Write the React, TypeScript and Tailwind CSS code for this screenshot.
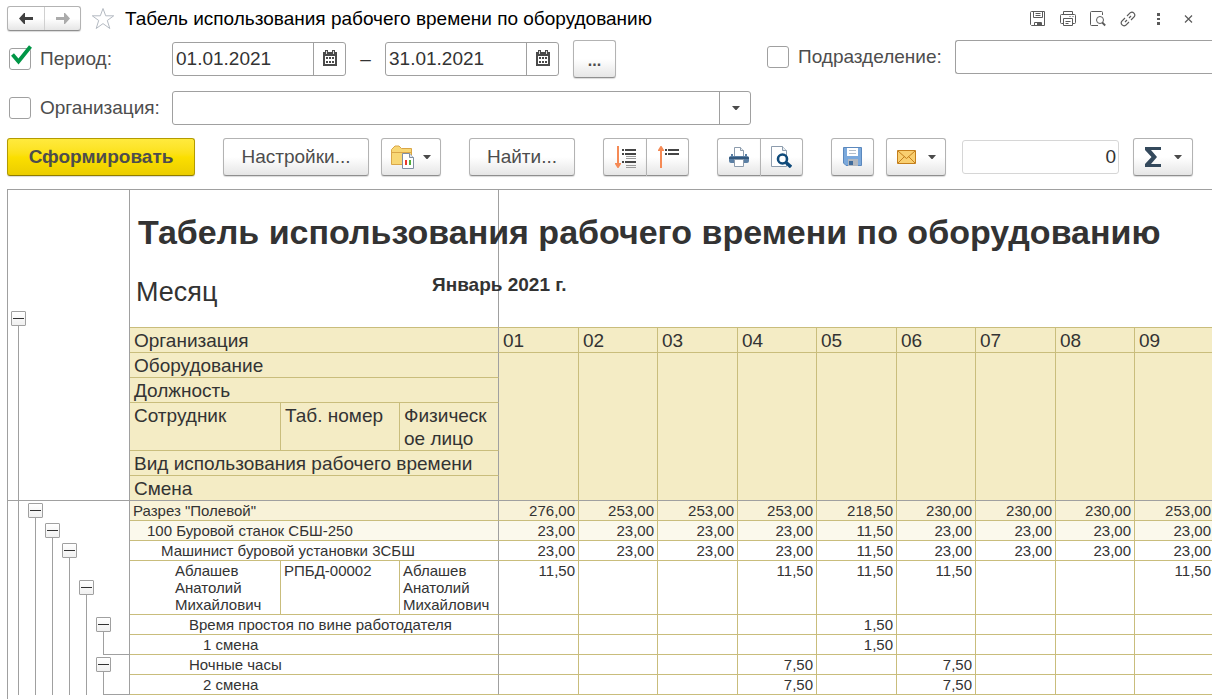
import type { ReactNode } from "react";
import clsx from "clsx";

type Row = {
  level: number;
  cells: string[];
  values: string[];
  tone?: string;
  last?: boolean;
};

const days = ["01", "02", "03", "04", "05", "06", "07", "08", "09"];

const rows: Row[] = [
  {
    level: 1,
    cells: ['Разрез "Полевой"'],
    values: ["276,00", "253,00", "253,00", "253,00", "218,50", "230,00", "230,00", "230,00", "253,00"],
    tone: "bg-[#f8f2d8]",
  },
  {
    level: 2,
    cells: ["100 Буровой станок СБШ-250"],
    values: ["23,00", "23,00", "23,00", "23,00", "11,50", "23,00", "23,00", "23,00", "23,00"],
    tone: "bg-[#fbf9ec]",
  },
  {
    level: 3,
    cells: ["Машинист буровой установки 3СБШ"],
    values: ["23,00", "23,00", "23,00", "23,00", "11,50", "23,00", "23,00", "23,00", "23,00"],
  },
  {
    level: 4,
    cells: ["Аблашев Анатолий Михайлович", "РПБД-00002", "Аблашев Анатолий Михайлович"],
    values: ["11,50", "", "", "11,50", "11,50", "11,50", "", "", "11,50"],
  },
  {
    level: 5,
    cells: ["Время простоя по вине работодателя"],
    values: ["", "", "", "", "1,50", "", "", "", ""],
  },
  {
    level: 6,
    cells: ["1 смена"],
    values: ["", "", "", "", "1,50", "", "", "", ""],
    last: true,
  },
  {
    level: 5,
    cells: ["Ночные часы"],
    values: ["", "", "", "7,50", "", "7,50", "", "", ""],
  },
  {
    level: 6,
    cells: ["2 смена"],
    values: ["", "", "", "7,50", "", "7,50", "", "", ""],
    last: true,
  },
];

const indents = ["", "pl-[3px]", "pl-[17px]", "pl-[31px]", "pl-[45px]", "pl-[59px]", "pl-[73px]"];

const button =
  "flex h-[38px] items-center justify-center border border-[#b3b3b3] border-b-[#8f8f8f] bg-linear-to-b from-white from-50% to-[#e6e6e6] text-[#4d4d4d] shadow-[0_1px_1px_rgba(0,0,0,0.15)]";

function ToolButton({ label, className, children }: { label: string; className?: string; children: ReactNode }) {
  return (
    <button type="button" aria-label={label} className={clsx(button, className ?? "w-[43px] rounded-[3px]")}>
      {children}
    </button>
  );
}

function Caret() {
  return (
    <svg width="8" height="4" viewBox="0 0 8 4" aria-hidden="true">
      <path d="M0 0h8L4.500 4h-1z" fill="#4a4a4a" />
    </svg>
  );
}

function CalendarIcon() {
  return (
    <svg width="14" height="16" viewBox="0 0 14 16" aria-hidden="true">
      <path d="M0 2h2V0h3v2h4V0h3v2h2v14H0z" fill="#4a4a4a" />
      <path d="M2 6h10v8H2z" fill="#fff" />
      <path d="M3 1h1v3H3zM10 1h1v3h-1z" fill="#ddd" />
      <path d="M3 7h2v2H3zM6 7h2v2H6zM9 7h2v2H9zM3 11h2v2H3zM6 11h2v2H6zM9 11h2v2H9z" fill="#4a4a4a" />
    </svg>
  );
}

function CheckField({ id, label, checked }: { id: string; label: string; checked?: boolean }) {
  return (
    <div className="relative flex items-center gap-[9px]">
      <input
        id={id}
        type="checkbox"
        defaultChecked={checked}
        className="peer size-[22px] appearance-none rounded-[3px] border border-[#a0a0a0] bg-white"
      />
      <svg
        className="pointer-events-none absolute -top-0.5 left-0.5 hidden peer-checked:block"
        width="22"
        height="20"
        viewBox="0 0 22 20"
        aria-hidden="true"
      >
        <path d="M1.500 9.500l6 7L19.500 1.500" fill="none" stroke="#009646" strokeWidth="3.800" />
      </svg>
      <label htmlFor={id} className="text-[19px] leading-6 text-[#4d4d4d]">
        {label}
      </label>
    </div>
  );
}

function DateField({ label, value }: { label: string; value: string }) {
  return (
    <div className="flex h-[34px] w-[174px] rounded-[3px] border border-[#a0a0a0]">
      <input
        aria-label={label}
        defaultValue={value}
        className="min-w-0 flex-1 pl-[3px] text-[19px] text-[#333] outline-none"
      />
      <button
        type="button"
        aria-label="Выбрать дату"
        className="flex w-8 items-center justify-center border-l border-[#a0a0a0] pb-0.5"
      >
        <CalendarIcon />
      </button>
    </div>
  );
}

function TitleBar() {
  return (
    <header className="flex items-center pt-1.5">
      <div className="flex h-[25px] rounded-[3px] border border-[#b3b3b3] border-b-[#8f8f8f] bg-linear-to-b from-white from-50% to-[#e6e6e6] shadow-[0_1px_1px_rgba(0,0,0,0.15)]">
        <button type="button" aria-label="Назад" className="flex w-9 items-center justify-center">
          <svg width="14" height="11" viewBox="0 0 14 11" aria-hidden="true">
            <path d="M0 5.500L5 0h1v4h8v3H6v4H5z" fill="#404040" />
          </svg>
        </button>
        <button
          type="button"
          aria-label="Вперед"
          className="flex w-9 items-center justify-center border-l border-[#d0d0d0]"
        >
          <svg width="14" height="11" viewBox="0 0 14 11" aria-hidden="true">
            <path d="M14 5.500L9 0H8v4H0v3h8v4h1z" fill="#ababab" />
          </svg>
        </button>
      </div>
      <button type="button" aria-label="В избранное" className="ml-[10px]">
        <svg width="24" height="23" viewBox="0 0 24 23" aria-hidden="true">
          <path
            d="M12 1.500l2.700 7.300h8l-6.400 4.700 2.500 8L12 16.600l-6.800 4.900 2.500-8L1.300 8.800h8z"
            fill="none"
            stroke="#b4bac2"
          />
        </svg>
      </button>
      <h1 className="ml-[10px] flex-1 text-[19px] leading-6 text-black">
        Табель использования рабочего времени по оборудованию
      </h1>
      <div className="flex pr-[9px] text-[#5a5a5a]">
        <button type="button" aria-label="Сохранить" className="flex w-[30px] justify-center">
          <svg width="16" height="16" viewBox="0 0 16 16" fill="none" stroke="currentColor" aria-hidden="true">
            <path d="M.5 1.500a1 1 0 0 1 1-1h13v14h-13l-1-1zM3.500.5v6h9v-6M5.500 2.500h5M5.500 4.500h5M4.500 14.500v-3h7v3" />
            <path d="M7 12h4v2H7z" fill="currentColor" stroke="none" />
          </svg>
        </button>
        <button type="button" aria-label="Печать" className="flex w-[30px] justify-center">
          <svg width="16" height="16" viewBox="0 0 16 16" fill="none" stroke="currentColor" aria-hidden="true">
            <path d="M3.500 3.500v-3h9v3M3.500 12.500h-2a1 1 0 0 1-1-1v-7a1 1 0 0 1 1-1h13a1 1 0 0 1 1 1v7a1 1 0 0 1-1 1h-2M3.500 7.500h9v7h-9zM5.500 10.500h5M5.500 12.500h3M9.500 5.500h1M12.500 5.500h1" />
          </svg>
        </button>
        <button type="button" aria-label="Просмотр" className="flex w-[30px] justify-center">
          <svg width="16" height="16" viewBox="0 0 16 16" fill="none" stroke="currentColor" aria-hidden="true">
            <path d="M12.500 4v-2.500a1 1 0 0 0-1-1h-10a1 1 0 0 0-1 1v12a1 1 0 0 0 1 1H8" />
            <circle cx="10" cy="9" r="3.500" />
            <path d="M12.200 11.500l3 3" strokeWidth="1.800" />
          </svg>
        </button>
        <button type="button" aria-label="Ссылка" className="flex w-[30px] justify-center">
          <svg width="16" height="16" viewBox="0 0 16 16" fill="none" stroke="currentColor" strokeWidth="1.200" aria-hidden="true">
            <path d="M7 5l3.300-3.300a2.900 2.900 0 0 1 4 4L11 9M9 11l-3.300 3.300a2.900 2.900 0 0 1-4-4L5 7M5 11l2-2M9 7l2-2" />
          </svg>
        </button>
        <button type="button" aria-label="Ещё" className="flex w-[30px] justify-center">
          <svg width="16" height="16" viewBox="0 0 16 16" fill="currentColor" aria-hidden="true">
            <path d="M7 2h3v3H7zM7 7h3v2H7zM7 11h3v3H7z" />
          </svg>
        </button>
        <button type="button" aria-label="Закрыть" className="flex w-[30px] justify-center">
          <svg width="16" height="16" viewBox="0 0 16 16" stroke="currentColor" strokeWidth="1.200" aria-hidden="true">
            <path d="M5 4.500l7 7M12 4.500l-7 7" />
          </svg>
        </button>
      </div>
    </header>
  );
}

function Filters() {
  return (
    <>
      <div className="mt-[9px] flex h-[38px] items-center">
        <div className="w-[165px] pl-0.5">
          <CheckField id="period" label="Период:" checked />
        </div>
        <DateField label="Начало периода" value="01.01.2021" />
        <span className="w-[39px] text-center text-[19px] text-[#333]">–</span>
        <DateField label="Конец периода" value="31.01.2021" />
        <ToolButton label="Выбрать период" className="ml-[14px] w-[43px] rounded-[3px] pt-1 text-base font-bold">
          ...
        </ToolButton>
        <div className="ml-[151px] flex flex-1 items-center pb-1">
          <CheckField id="department" label="Подразделение:" />
          <input
            aria-label="Подразделение"
            className="ml-[13px] h-[34px] min-w-0 flex-1 rounded-l-[3px] border border-r-0 border-[#a0a0a0] px-1 text-[19px] outline-none"
          />
        </div>
      </div>
      <div className="mt-[13px] flex items-center">
        <div className="w-[165px] pl-0.5">
          <CheckField id="organization" label="Организация:" />
        </div>
        <div className="relative h-[34px] w-[579px]">
          <select
            aria-label="Организация"
            className="size-full appearance-none rounded-[3px] border border-[#a0a0a0] bg-white px-1 text-[19px]"
          />
          <span className="pointer-events-none absolute inset-y-0 right-0 flex w-8 items-center justify-center border-l border-[#a0a0a0]">
            <Caret />
          </span>
        </div>
      </div>
    </>
  );
}

function Toolbar() {
  return (
    <div className="mt-[13px] flex items-center">
      <button
        type="button"
        className="h-[38px] w-[188px] rounded-[3px] border border-[#b39b00] border-b-[#8f7c00] bg-linear-to-b from-[#ffea3d] via-[#fbdf00] to-[#ebcd00] text-[19px] font-bold text-[#4d4d4d] shadow-[0_1px_1px_rgba(0,0,0,0.15)]"
      >
        Сформировать
      </button>
      <ToolButton label="Настройки..." className="ml-7 w-[146px] rounded-[3px] text-[19px]">
        Настройки...
      </ToolButton>
      <ToolButton label="Варианты отчета" className="ml-3 w-[60px] gap-2 rounded-[3px]">
        <svg width="24" height="24" viewBox="0 0 24 24" aria-hidden="true">
          <path d="M.5 19.500V4.500l3.500-3.500h4l2.500 2.500h10v16z" fill="#f8d775" stroke="#d9a648" />
          <path d="M.5 7.500h20" stroke="#d9a648" />
          <path d="M11.500 8.500h7l4 4v11h-11z" fill="#fff" stroke="#7f8fa3" />
          <path d="M18.500 8.500v4h4" fill="#dfe5ec" stroke="#7f8fa3" />
          <path d="M14 15h2v5h-2z" fill="#e8392b" />
          <path d="M18 15h2v5h-2z" fill="#4fae3c" />
        </svg>
        <Caret />
      </ToolButton>
      <ToolButton label="Найти..." className="ml-7 w-[106px] rounded-[3px] text-[19px]">
        Найти...
      </ToolButton>
      <div className="ml-7 flex">
        <ToolButton label="Развернуть группы" className="w-[43px] rounded-l-[3px] border-r-0">
          <svg width="22" height="24" viewBox="0 0 22 24" aria-hidden="true">
            <path d="M3 1h2v17h2v1l-2.500 4h-1L1 19v-1h2z" fill="#f58a55" />
            <path d="M8 4h2v2H8zM8 8h2v2H8zM11 4h11v2H11zM11 8h11v2H11zM8 16h2v2H8zM11 16h11v2H11z" fill="#454545" />
            <path d="M12 11h10v1H12zM12 13h10v1H12zM12 20h10v1H12zM12 22h10v1H12z" fill="#9a9a9a" />
          </svg>
        </ToolButton>
        <ToolButton label="Свернуть группы" className="w-[43px] rounded-r-[3px]">
          <svg width="22" height="24" viewBox="0 0 22 24" aria-hidden="true">
            <path d="M3 23h2V6h2V5L4.500 1h-1L1 5v1h2z" fill="#f58a55" />
            <path d="M8 4h2v2H8zM8 8h2v2H8zM11 4h11v2H11zM11 8h11v2H11z" fill="#454545" />
          </svg>
        </ToolButton>
      </div>
      <div className="ml-7 flex">
        <ToolButton label="Печать отчета" className="w-[43px] rounded-l-[3px] border-r-0">
          <svg width="20" height="20" viewBox="0 0 20 20" aria-hidden="true">
            <path d="M5.500 11V.5h6l3 3V11" fill="#fff" stroke="#8d9cad" />
            <path d="M11.500.5v3h3" fill="#e8edf2" stroke="#8d9cad" />
            <path d="M2 7h2v2h12V7h2v2q2 0 2 2v3q0 2-2 2H2q-2 0-2-2v-3q0-2 2-2z" fill="#5b80a5" />
            <path d="M0 11q0-1 1-1h18q1 0 1 1v1H0z" fill="#33587d" />
            <path d="M5.500 12.500h9v7h-9z" fill="#fff" stroke="#8d9cad" />
          </svg>
        </ToolButton>
        <ToolButton label="Предварительный просмотр" className="w-[43px] rounded-r-[3px]">
          <svg width="21" height="22" viewBox="0 0 21 22" aria-hidden="true">
            <path d="M.5.5h11l4 4v16H.5z" fill="#fff" stroke="#8d9cad" />
            <path d="M11.500.5v4h4" fill="#e8edf2" stroke="#8d9cad" />
            <circle cx="11.500" cy="13" r="4.500" fill="#fff" stroke="#0f4a7a" strokeWidth="2.600" />
            <path d="M15 16.500l5 4.500" stroke="#0f4a7a" strokeWidth="3.400" />
          </svg>
        </ToolButton>
      </div>
      <div className="ml-7">
        <ToolButton label="Сохранить отчет">
          <svg width="20" height="20" viewBox="0 0 20 20" aria-hidden="true">
            <path d="M.5.5h18v18H3l-2.500-2.500z" fill="#7ba9dc" stroke="#5b88bd" />
            <path d="M4 1h11v8H4z" fill="#fff" />
            <path d="M6 3.500h7M6 6.500h7" stroke="#b5bfca" />
            <path d="M5 12h10v7H5z" fill="#b3b8bf" />
            <path d="M6 14h4v4H6z" fill="#3f6b9b" />
          </svg>
        </ToolButton>
      </div>
      <ToolButton label="Отправить" className="ml-3 w-[60px] gap-[11px] rounded-[3px]">
        <svg width="20" height="14" viewBox="0 0 20 14" aria-hidden="true">
          <path d="M.5.5h18v13H.5z" fill="#f9cf70" stroke="#c47f1c" />
          <path d="M1 1l8.500 7.500L18 1M1 13l6.500-6.500M18 13l-6.500-6.500" fill="none" stroke="#c47f1c" />
        </svg>
        <Caret />
      </ToolButton>
      <input
        aria-label="Сумма выделенных ячеек"
        defaultValue="0"
        className="ml-4 h-[34px] w-[157px] rounded-[3px] border border-[#d6d6d6] pr-0.5 text-right text-[19px] text-[#333] outline-none"
      />
      <ToolButton label="Показатели" className="ml-[14px] w-[60px] gap-3 rounded-[3px]">
        <svg width="17" height="20" viewBox="0 0 17 20" aria-hidden="true">
          <path d="M0 0h16v3H6l6 7-6 7h10v3H0v-3l6.500-7L0 3z" fill="#34495c" />
        </svg>
        <Caret />
      </ToolButton>
    </div>
  );
}

function Collapse() {
  return (
    <button
      type="button"
      aria-label="Свернуть"
      className="flex size-[15px] shrink-0 items-center justify-center rounded-[1px] border border-[#a0a0a0] bg-linear-to-b from-white to-[#f0f0f0]"
    >
      <span className="h-px w-[11px] bg-[#333]" />
    </button>
  );
}

// Group outline to the left of a row: lines of the open parents, then the row's own toggle
function Outline({ level, last }: { level: number; last?: boolean }) {
  const parents = last ? level - 1 : level;
  return (
    <div className="flex h-full pl-0.5">
      {Array.from({ length: parents }, (_, i) => (
        <div key={i} className="flex w-[17px] justify-center">
          <span className="w-px bg-[#a0a0a0]" />
        </div>
      ))}
      {last ? (
        <div className="flex flex-1 pl-2">
          <span className="flex-1 border-b border-l border-[#a0a0a0]" />
        </div>
      ) : (
        <div className="flex w-[17px] flex-col items-center">
          <span className="flex-1" />
          <Collapse />
          <span className="w-px flex-1 bg-[#a0a0a0]" />
          <span className="h-px w-px bg-[#a0a0a0]" />
        </div>
      )}
    </div>
  );
}

const head = "border-b border-[#c9bd7c] bg-[#f4ecc5] pt-px pl-1 text-left align-top font-normal";

function Report() {
  return (
    <main className="mt-[13px] flex-1 overflow-hidden border-t border-l border-[#a0a0a0]">
      <table className="w-full min-w-[1207px] table-fixed border-separate border-spacing-0 text-[#333]">
        <colgroup>
          <col className="w-[122px]" />
          <col className="w-[151px]" />
          <col className="w-[119px]" />
          <col className="w-[99px]" />
          {days.map((day, i) => (
            <col key={day} className={i % 2 ? "w-[79px]" : "w-[80px]"} />
          ))}
        </colgroup>
        <thead className="text-[19px] leading-[23px]">
          <tr className="h-[78px]">
            <td className="border-r border-[#a0a0a0]" />
            <td
              colSpan={3}
              className="border-r border-[#a0a0a0] pt-1.5 pl-2 text-[34px] leading-10 font-bold whitespace-nowrap"
            >
              Табель использования рабочего времени по оборудованию
            </td>
            <td colSpan={9} />
          </tr>
          <tr className="h-[60px]">
            <td className="border-r border-[#a0a0a0] pl-0.5 align-bottom">
              <div className="flex w-[17px] flex-col items-center">
                <Collapse />
                <span className="h-0.5 w-px bg-[#a0a0a0]" />
              </div>
            </td>
            <td colSpan={2} className="border-b border-[#c9bd7c] pt-2 pl-1.5 align-top text-[27px] leading-8">
              Месяц
            </td>
            <td className="border-r border-b border-r-[#a0a0a0] border-b-[#c9bd7c] pt-px pl-8 align-top leading-8 font-bold whitespace-nowrap">
              Январь 2021 г.
            </td>
            <td colSpan={9} className="border-b border-[#c9bd7c]" />
          </tr>
          <tr>
            <td rowSpan={6} className="h-px border-r border-b border-[#a0a0a0]">
              <div className="flex h-full pl-[10px]">
                <span className="w-px bg-[#a0a0a0]" />
              </div>
            </td>
            <th colSpan={3} className={clsx(head, "border-r border-r-[#a0a0a0]")}>
              Организация
            </th>
            {days.map((day) => (
              <th key={day} className={clsx(head, "border-r")}>
                {day}
              </th>
            ))}
          </tr>
          <tr>
            <th colSpan={3} className={clsx(head, "border-r border-r-[#a0a0a0]")}>
              Оборудование
            </th>
            {days.map((day) => (
              <td key={day} rowSpan={5} className="border-r border-b border-r-[#c9bd7c] border-b-[#a0a0a0] bg-[#f4ecc5]" />
            ))}
          </tr>
          <tr>
            <th colSpan={3} className={clsx(head, "border-r border-r-[#a0a0a0]")}>
              Должность
            </th>
          </tr>
          <tr>
            <th className={clsx(head, "border-r")}>Сотрудник</th>
            <th className={clsx(head, "border-r")}>Таб. номер</th>
            <th className={clsx(head, "border-r border-r-[#a0a0a0] pr-1 break-words")}>Физическое лицо</th>
          </tr>
          <tr>
            <th colSpan={3} className={clsx(head, "border-r border-r-[#a0a0a0]")}>
              Вид использования рабочего времени
            </th>
          </tr>
          <tr>
            <th colSpan={3} className="border-r border-b border-[#a0a0a0] bg-[#f4ecc5] pt-px pl-1 text-left font-normal">
              Смена
            </th>
          </tr>
        </thead>
        <tbody className="text-[15px] leading-[17px]">
          {rows.map((row) => (
            <tr key={row.cells[0]}>
              <td className="h-px border-r border-[#a0a0a0]">
                <Outline level={row.level} last={row.last} />
              </td>
              {row.cells.map((cell, i) => (
                <td
                  key={i}
                  colSpan={row.cells.length === 1 ? 3 : 1}
                  className={clsx(
                    "border-r border-b border-b-[#c9bd7c] py-px align-top",
                    i === row.cells.length - 1 ? "border-r-[#a0a0a0]" : "border-r-[#c9bd7c]",
                    i === 0 ? indents[row.level] : "pl-[3px]",
                    row.tone
                  )}
                >
                  {cell}
                </td>
              ))}
              {row.values.map((value, i) => (
                <td
                  key={i}
                  className={clsx("border-r border-b border-[#c9bd7c] py-px pr-[3px] text-right align-top", row.tone)}
                >
                  {value}
                </td>
              ))}
            </tr>
          ))}
        </tbody>
      </table>
    </main>
  );
}

export default function App() {
  return (
    <div className="flex min-h-screen flex-col overflow-hidden bg-white pl-[7px] font-['Liberation_Sans',Arial,sans-serif]">
      <TitleBar />
      <Filters />
      <Toolbar />
      <Report />
    </div>
  );
}
